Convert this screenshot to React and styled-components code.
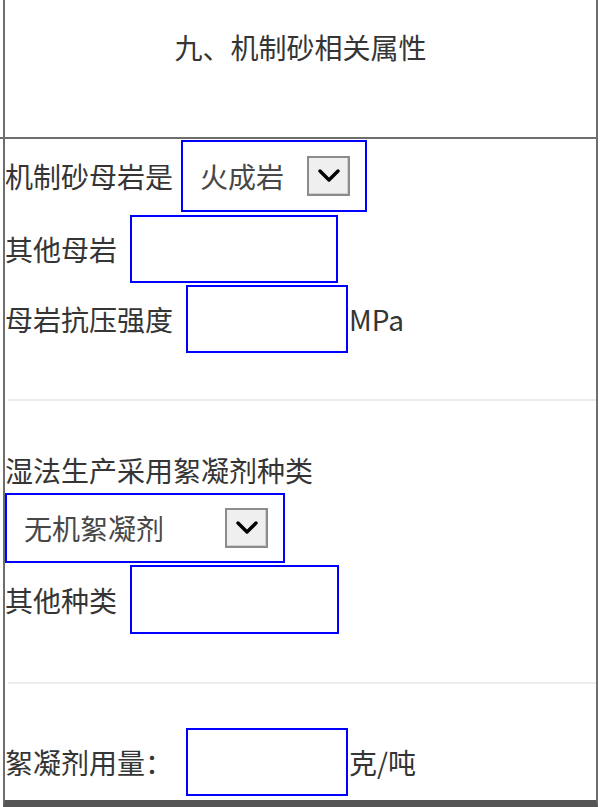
import styled, { createGlobalStyle } from "styled-components";

const GlobalStyle = createGlobalStyle`
  html, body {
    margin: 0;
    padding: 0;
    background: #ffffff;
    overflow: hidden;
  }
  * {
    box-sizing: border-box;
  }
`;

const Page = styled.div`
  width: 600px;
  height: 807px;
  overflow: hidden;
  font-family: "Noto Sans CJK SC", "Noto Sans", sans-serif;
  color: #353535;
`;

const Frame = styled.div`
  margin-left: 3px;
  width: 595px;
  height: 807px;
  border-left: 2px solid #6e6e6e;
  border-right: 2px solid #6e6e6e;
  border-bottom: 7px solid #555555;
  display: flex;
  flex-direction: column;
`;

const Header = styled.div`
  height: 137px;
  padding-top: 27px;
  text-align: center;
  font-size: 28px;
  line-height: 40px;
`;

const TopRule = styled.div`
  height: 2px;
  margin: 0 0 0 -5px;
  background: #6e6e6e;
`;

const Section = styled.div`
  display: flex;
  flex-direction: column;
  gap: ${(p) => p.$gap || 2}px;
  padding-top: ${(p) => p.$top || 0}px;
`;

const Row = styled.div`
  display: flex;
  align-items: center;
  white-space: nowrap;
  margin-top: ${(p) => p.$shift || 0}px;
`;

const Label = styled.span`
  font-size: 28px;
  line-height: 1;
  margin-right: ${(p) => p.$gap ?? 13}px;
`;

const Title = styled.div`
  font-size: 28px;
  line-height: 40px;
`;

const Unit = styled.span`
  font-size: 28px;
  line-height: 1;
  margin-left: 1px;
`;

const Field = styled.input`
  width: ${(p) => p.$w}px;
  height: ${(p) => p.$h || 68}px;
  border: 2px solid #0000ff;
  background: #ffffff;
  outline: none;
  padding: 0 8px;
  font: inherit;
`;

const Select = styled.div`
  width: ${(p) => p.$w}px;
  height: ${(p) => p.$h || 72}px;
  border: 2px solid #0000ff;
  background: #ffffff;
  display: flex;
  align-items: center;
  justify-content: space-between;
  padding: 0 15px 0 17px;
`;

const SelectText = styled.span`
  font-size: 28px;
  line-height: 1;
  color: #484848;
`;

const Arrow = styled.span`
  width: 43px;
  height: 40px;
  border: 2px solid #8c8c8c;
  background: #efefef;
  display: flex;
  align-items: center;
  justify-content: center;
  box-shadow: inset -1px -1px 0 #d0d0d0;
`;

const Divider = styled.div`
  height: 2px;
  margin: ${(p) => p.$top}px 0 0 3px;
  background: #ececec;
`;

function Chevron() {
  return (
    <svg width="22" height="14" viewBox="0 0 22 14">
      <polyline
        points="2,2 11,11 20,2"
        fill="none"
        stroke="#000"
        strokeWidth="3.4"
        strokeLinecap="round"
        strokeLinejoin="round"
      />
    </svg>
  );
}

function Dropdown({ value, width, height }) {
  return (
    <Select $w={width} $h={height}>
      <SelectText>{value}</SelectText>
      <Arrow>
        <Chevron />
      </Arrow>
    </Select>
  );
}

export default function App() {
  return (
    <>
      <GlobalStyle />
      <Page>
        <Frame>
          <Header>九、机制砂相关属性</Header>
          <TopRule />

          <Section $top={1} $gap={2}>
            <Row>
              <Label $gap={8}>机制砂母岩是</Label>
              <Dropdown value="火成岩" width={186} />
            </Row>
            <Row $shift={1}>
              <Label>其他母岩</Label>
              <Field $w={208} />
            </Row>
            <Row>
              <Label>母岩抗压强度</Label>
              <Field $w={162} />
              <Unit>MPa</Unit>
            </Row>
          </Section>

          <Divider $top={46} />

          <Section $top={49} $gap={3}>
            <Title>湿法生产采用絮凝剂种类</Title>
            <Row>
              <Dropdown value="无机絮凝剂" width={280} height={70} />
            </Row>
            <Row $shift={-1}>
              <Label>其他种类</Label>
              <Field $w={209} $h={69} />
            </Row>
          </Section>

          <Divider $top={48} />

          <Section $top={44}>
            <Row>
              <Label>絮凝剂用量：</Label>
              <Field $w={162} />
              <Unit>克/吨</Unit>
            </Row>
          </Section>
        </Frame>
      </Page>
    </>
  );
}
